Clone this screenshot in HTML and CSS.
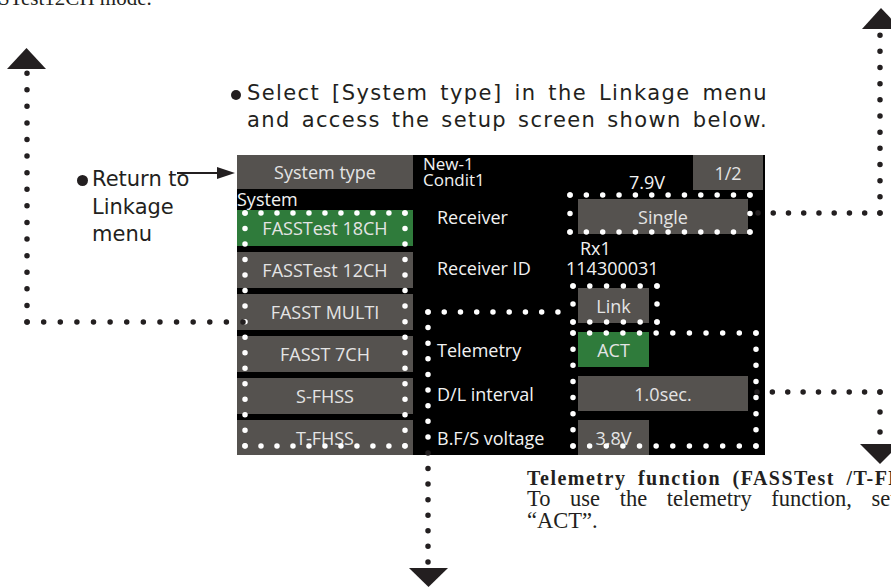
FILE: index.html
```html
<!DOCTYPE html>
<html lang="en">
<head>
<meta charset="utf-8">
<title>System type</title>
<link rel="stylesheet" href="styles.css">
</head>
<body>
<div class="page">
  <div class="cut-line"><span>STest12CH mode.</span></div>

  <div class="intro">
    <span class="dot intro-dot"></span>
    <p class="intro-text">Select [System type] in the Linkage menu<br>and access the setup screen shown below.</p>
  </div>

  <div class="stage">
    <div class="return-note">
      <p class="note-text"><span class="dot note-dot"></span>Return to<br>Linkage<br>menu</p>
    </div>

    <div class="screen">
      <div class="col-left">
        <div class="btn title-btn">System type</div>
        <div class="sys-label">System</div>
        <div class="btn sys-btn green first">FASSTest 18CH</div>
        <div class="btn sys-btn">FASSTest 12CH</div>
        <div class="btn sys-btn">FASST MULTI</div>
        <div class="btn sys-btn">FASST 7CH</div>
        <div class="btn sys-btn">S-FHSS</div>
        <div class="btn sys-btn">T-FHSS</div>
      </div>

      <div class="col-right">
        <div class="header">
          <div class="model">New-1<br>Condit1</div>
          <div class="volt">7.9V</div>
          <div class="btn page-btn">1/2</div>
        </div>
        <div class="row">
          <span class="label">Receiver</span>
          <div class="btn val wide">Single</div>
        </div>
        <div class="rx-block">
          <div class="rx-line">Rx1</div>
          <div class="id-line"><span class="id-label">Receiver ID</span><span>114300031</span></div>
        </div>
        <div class="row">
          <span class="label"></span>
          <div class="btn val narrow">Link</div>
        </div>
        <div class="row spaced">
          <span class="label">Telemetry</span>
          <div class="btn val narrow green">ACT</div>
        </div>
        <div class="row spaced">
          <span class="label">D/L interval</span>
          <div class="btn val wide">1.0sec.</div>
        </div>
        <div class="row spaced">
          <span class="label">B.F/S voltage</span>
          <div class="btn val narrow">3.8V</div>
        </div>
      </div>
    </div>
  </div>

  <div class="tele-note">
    <p class="tele-title">Telemetry function (FASSTest /T-FHSS mode)</p>
    <p class="tele-body spread">To use the telemetry function, set [Telemetry] to</p>
    <p class="tele-body">“ACT”.</p>
  </div>

  <svg class="leaders" width="891" height="587" viewBox="0 0 891 587" aria-hidden="true">
    <g class="dots-white">
      <path d="M245 213H405" stroke-dasharray="0 15.99"/>
      <path d="M245 446H405" stroke-dasharray="0 15.99"/>
      <path d="M245 213V446" stroke-dasharray="0 15.52"/>
      <path d="M405 213V446" stroke-dasharray="0 15.52"/>

      <path d="M570 195H750" stroke-dasharray="0 16.35"/>
      <path d="M570 232H750" stroke-dasharray="0 16.35"/>
      <path d="M570 195V232" stroke-dasharray="0 18.49"/>
      <path d="M750 195V232" stroke-dasharray="0 18.49"/>

      <path d="M573 286H657" stroke-dasharray="0 16.79"/>
      <path d="M573 322H657" stroke-dasharray="0 16.79"/>
      <path d="M573 286V322" stroke-dasharray="0 17.99"/>
      <path d="M657 286V322" stroke-dasharray="0 17.99"/>

      <path d="M428 312H558" stroke-dasharray="0 16.24"/>
      <path d="M428 312V437" stroke-dasharray="0 15.62"/>

      <path d="M573 333H756" stroke-dasharray="0 16.63"/>
      <path d="M573 446H756" stroke-dasharray="0 16.63"/>
      <path d="M573 333V446" stroke-dasharray="0 16.13"/>
      <path d="M756 333V446" stroke-dasharray="0 16.13"/>
    </g>
    <g class="dots-black">
      <path d="M243 322H27" stroke-dasharray="0 16.61"/>
      <path d="M27 322V73" stroke-dasharray="0 16.59"/>
      <path d="M758 213H880" stroke-dasharray="0 15.24"/>
      <path d="M880 213V35" stroke-dasharray="0 16.17"/>
      <path d="M757 392H880" stroke-dasharray="0 15.37"/>
      <path d="M880 392V432" stroke-dasharray="0 19.99"/>
      <path d="M428 453V562" stroke-dasharray="0 15.56"/>
    </g>
    <g class="heads">
      <polygon points="7,69 46,69 26.5,48"/>
      <polygon points="862,29 901,29 881,8"/>
      <polygon points="860,444 900,444 880,464"/>
      <polygon points="409,568 448,568 428.5,587"/>
      <path class="shaft" d="M177 173H219"/>
      <polygon points="217,167 235,173 217,179"/>
    </g>
  </svg>
</div>
</body>
</html>
```

FILE: styles.css
```css
* {
  box-sizing: border-box;
  margin: 0;
  padding: 0;
}

html,
body {
  width: 891px;
  height: 587px;
  overflow: hidden;
  background: #ffffff;
}

body {
  font-family: "DejaVu Sans", "Liberation Sans", sans-serif;
  color: #231f20;
}

.page {
  position: relative;
  width: 891px;
  height: 587px;
  display: flex;
  flex-direction: column;
  overflow: hidden;
}

/* partially visible line of previous paragraph */
.cut-line {
  height: 6px;
  overflow: hidden;
  font-family: "Liberation Serif", serif;
  font-size: 21px;
  line-height: 20px;
  white-space: nowrap;
}

.cut-line span {
  display: block;
  margin-top: -12px;
  margin-left: -2px;
}

.dot {
  display: inline-block;
  border-radius: 50%;
  background: #231f20;
}

/* instruction */
.intro {
  margin-top: 74px;
  display: flex;
  align-items: flex-start;
  padding-left: 231px;
  font-size: 21px;
  line-height: 27px;
  letter-spacing: 1.4px;
}

.intro-dot {
  width: 10px;
  height: 10px;
  margin-top: 10px;
  margin-right: 6px;
  flex: none;
}

.intro-text {
  width: 521px;
  text-align: justify;
  text-align-last: justify;
}

/* screen row */
.stage {
  margin-top: 21px;
  height: 300px;
  display: flex;
}

.return-note {
  width: 237px;
  flex: none;
  padding: 11px 0 0 92px;
  font-size: 21px;
  line-height: 27.5px;
}

.note-dot {
  width: 11px;
  height: 11px;
  margin-left: -15px;
  margin-right: 4px;
}

.screen {
  width: 528px;
  height: 300px;
  flex: none;
  background: #000000;
  display: flex;
  overflow: hidden;
  font-family: "Open Sans", "Noto Sans", sans-serif;
  font-size: 18px;
  color: #f2f2f2;
}

.btn {
  background: #55524f;
  color: #e4e4e4;
  display: flex;
  align-items: center;
  justify-content: center;
  flex: none;
}

.green {
  background: #2f7b3b;
}

.col-left {
  width: 176px;
  flex: none;
  display: flex;
  flex-direction: column;
}

.title-btn {
  height: 34px;
}

.sys-label {
  height: 21px;
  line-height: 21px;
}

.sys-btn {
  height: 36px;
  margin-top: 6px;
}

.sys-btn.first {
  margin-top: 0;
}

.col-right {
  flex: 1;
  display: flex;
  flex-direction: column;
}

.header {
  height: 44px;
  display: flex;
  align-items: flex-start;
}

.model {
  width: 216px;
  padding: 1px 0 0 10px;
  font-size: 17px;
  line-height: 16px;
}

.volt {
  width: 64px;
  padding-top: 16px;
  line-height: 22px;
}

.page-btn {
  width: 70px;
  height: 35px;
}

.row {
  height: 35px;
  display: flex;
  align-items: center;
  flex: none;
}

.row.spaced {
  margin-top: 9px;
}

.label {
  width: 165px;
  padding-left: 24px;
  flex: none;
}

.val {
  height: 35px;
}

.wide {
  width: 170px;
}

.narrow {
  width: 71px;
}

.rx-block {
  height: 54px;
  padding-top: 4px;
  line-height: 20px;
  flex: none;
}

.rx-line {
  padding-left: 167px;
}

.id-line {
  display: flex;
}

.id-label {
  width: 153px;
  padding-left: 24px;
  flex: none;
}

/* telemetry note */
.tele-note {
  margin-top: 13px;
  padding-left: 527px;
  font-family: "Liberation Serif", serif;
  white-space: nowrap;
  color: #231f20;
  overflow: hidden;
}

.tele-title {
  font-weight: bold;
  font-size: 20px;
  line-height: 20px;
  letter-spacing: 1.5px;
  word-spacing: 5px;
}

.tele-body {
  font-size: 22.5px;
  line-height: 22px;
}

.tele-body.spread {
  word-spacing: 14px;
}

/* leader lines overlay */
.leaders {
  position: absolute;
  left: 0;
  top: 0;
  pointer-events: none;
}

.leaders path {
  fill: none;
  stroke-linecap: round;
  stroke-width: 5.5;
}

.dots-white path {
  stroke: #ffffff;
}

.dots-black path {
  stroke: #231f20;
}

.heads polygon {
  fill: #231f20;
}

.heads .shaft {
  stroke: #231f20;
  stroke-width: 2;
  stroke-linecap: butt;
}
```
